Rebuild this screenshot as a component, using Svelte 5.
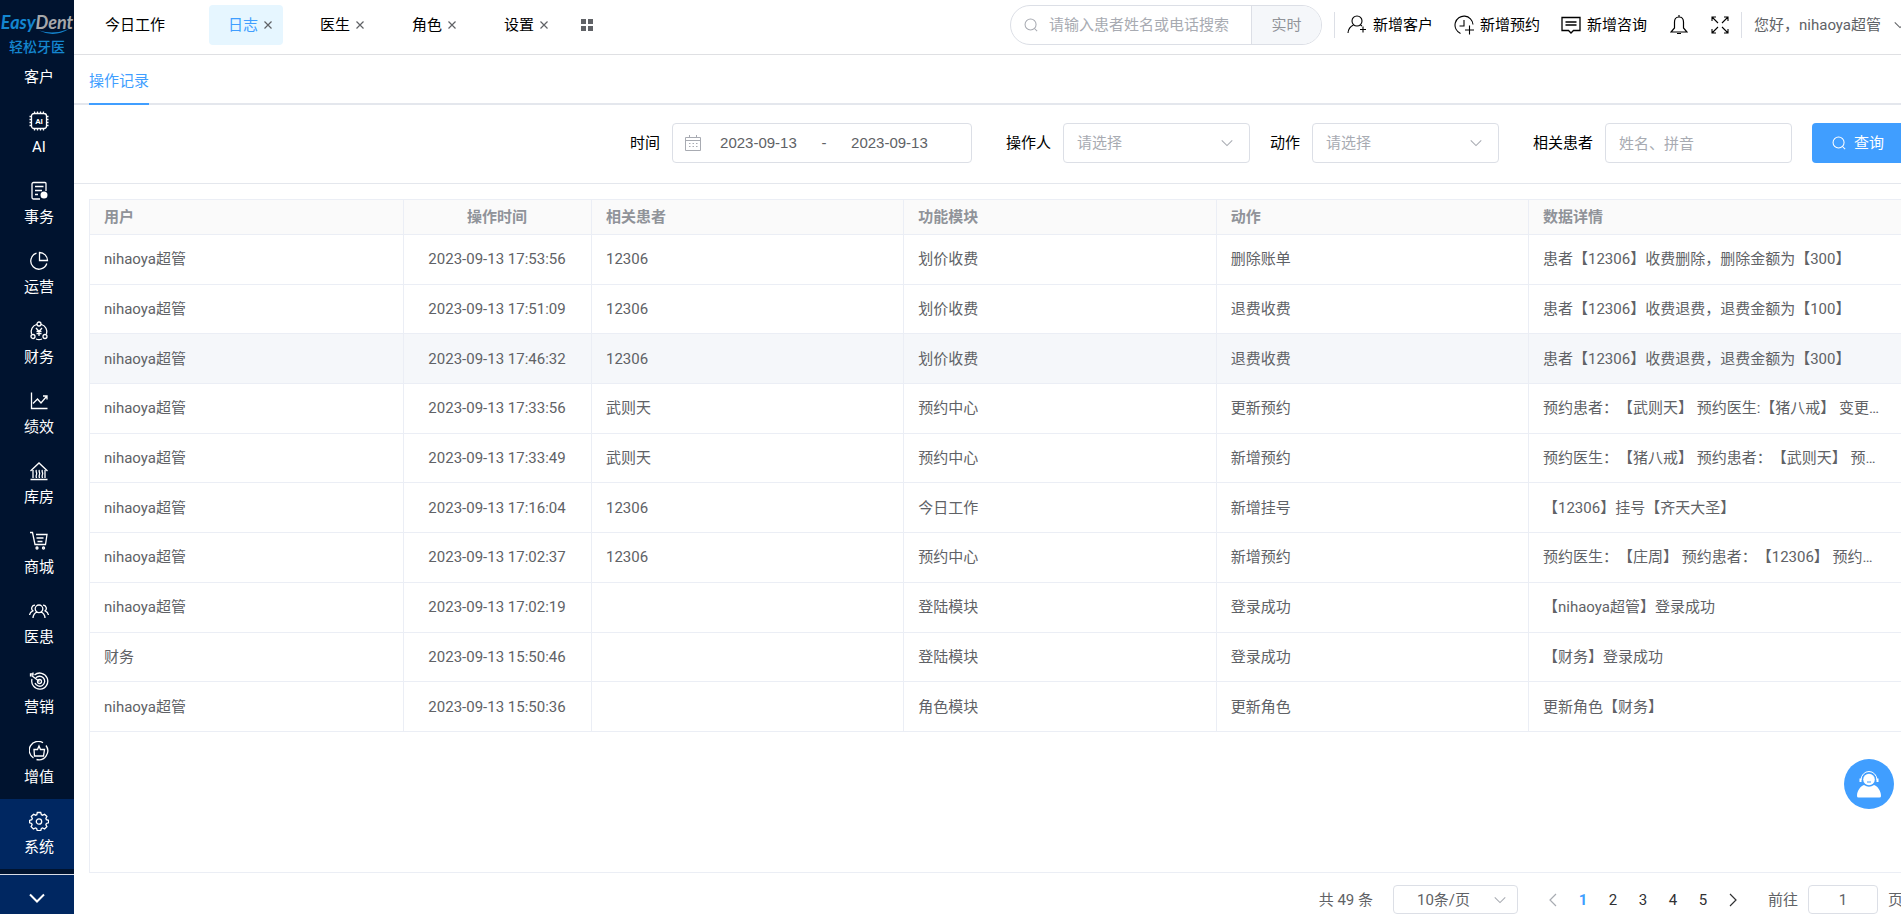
<script lang="ts">
	interface NavItem {
		label: string;
		d: string;
		solid?: string;
		text?: string;
	}

	interface LogRow {
		user: string;
		time: string;
		patient: string;
		module: string;
		action: string;
		detail: string;
	}

	const navItems: NavItem[] = [
		{ label: '客户', d: 'M10 3a3 3 0 1 1 0 6a3 3 0 1 1 0-6M4 17c0-8 12-8 12 0' },
		{
			label: 'AI',
			d: 'M5 2.5h10a2.5 2.5 0 0 1 2.5 2.5v10a2.5 2.5 0 0 1-2.5 2.5H5A2.5 2.5 0 0 1 2.5 15V5A2.5 2.5 0 0 1 5 2.5zM5.5 2V.5M8.5 2V.5M11.5 2V.5M14.5 2V.5M5.5 18v1.5M8.5 18v1.5M11.5 18v1.5M14.5 18v1.5M2 5.5H.5M2 8.5H.5M2 11.5H.5M2 14.5H.5M18 5.5h1.5M18 8.5h1.5M18 11.5h1.5M18 14.5h1.5',
			text: 'AI'
		},
		{
			label: '事务',
			d: 'M11 18H4.5a1.5 1.5 0 0 1-1.5-1.5V3a1.5 1.5 0 0 1 1.5-1.5H16A1 1 0 0 1 17 2.5V10M6 5.5h8.5M6 9.5h7M6 13.5h3',
			solid: 'M15 10.5a3.5 3.5 0 1 1 0 7a3.5 3.5 0 1 1 0-7'
		},
		{ label: '运营', d: 'M7.5 2.2a8.2 8.2 0 1 0 10.3 10.3M10.5 1.5v8h8a8 8 0 0 0-8-8z' },
		{
			label: '财务',
			d: 'M7.5 3.5A7.5 7.5 0 0 0 2.5 13M12.5 3.5a7.5 7.5 0 0 1 5 9.5M7 18c2 .8 4 .8 6 0M10 1a2 2 0 1 1 0 4a2 2 0 1 1 0-4M4 13.5a2 2 0 1 1 0 4a2 2 0 1 1 0-4M16 13.5a2 2 0 1 1 0 4a2 2 0 1 1 0-4M7 7l3 3.5L13 7M10 10.5V15M7.5 10.5h5M7.5 12.7h5'
		},
		{ label: '绩效', d: 'M2.5 1.5V17.5h16M4 12.5l4.5-4.5l3.5 4L17.5 5.5M14 5h4v3.5' },
		{
			label: '库房',
			d: 'M1.5 10L10 2l8.5 8M4 9v8M16 9v8M1.5 18.5h17M7.5 9c-1.5 1.5 1 2.5 0 4.5s0 3 0 3.5M10.5 9c-1.5 1.5 1 2.5 0 4.5s0 3 0 3.5M13.5 9c-1.5 1.5 1 2.5 0 4.5s0 3 0 3.5'
		},
		{
			label: '商城',
			d: 'M1 1.5h2.5L6 13.5h10.5L18 3.5H7M7.5 7h7M8.500 10.500h5M8 16a1 1 0 1 1 0 2a1 1 0 1 1 0-2M14.5 16a1 1 0 1 1 0 2a1 1 0 1 1 0-2'
		},
		{
			label: '医患',
			d: 'M10 4a3.8 3.8 0 1 1 0 7.6a3.8 3.8 0 1 1 0-7.6M4 17c0-3 2-5.5 4-5.8M16 17c0-3-2-5.5-4-5.8M6 4.2a3.2 3.2 0 0 0-2.2 5.6C2 10.5.8 12 .6 14M14 4.2a3.2 3.2 0 0 1 2.2 5.6c1.8.7 3 2.2 3.2 4.2'
		},
		{
			label: '营销',
			d: 'M5.5 4A8 8 0 1 1 3 8M6.500 7.500A5 5 0 1 1 6 12M10.5 8.500a2 2 0 1 1 0 4a2 2 0 1 1 0-4M10.5 10.5L2.5 4.5M1.5 5.5V3h3M4 1.5v3'
		},
		{
			label: '增值',
			d: 'M4.5 17A9 9 0 1 1 14 1.7M17 4.5a9 9 0 0 1-9.5 14M5 8.5h3.5L10 5l1.500 3.500H15.500L14.500 15H5.500z'
		},
		{
			label: '系统',
			d: 'M8.3 1.5h3.4l.7 2.2 1.2.5 2-1 2.3 2.3-1 2 .5 1.2 2.2.7v2.4l-2.200.7-.5 1.2 1 2-2.3 2.3-2-1-1.2.5-.7 2.2H8.3l-.7-2.2-1.2-.5-2 1-2.3-2.3 1-2-.5-1.2L.6 11.800V9.400l2.200-.7.5-1.2-1-2 2.300-2.300 2 1 1.2-.5zM10 7.8a2.7 2.7 0 1 1 0 5.4a2.7 2.7 0 1 1 0-5.4'
		}
	];

	const tabs = ['日志', '医生', '角色', '设置'];

	const rows: LogRow[] = [
		{ user: 'nihaoya超管', time: '2023-09-13 17:53:56', patient: '12306', module: '划价收费', action: '删除账单', detail: '患者【12306】收费删除，删除金额为【300】' },
		{ user: 'nihaoya超管', time: '2023-09-13 17:51:09', patient: '12306', module: '划价收费', action: '退费收费', detail: '患者【12306】收费退费，退费金额为【100】' },
		{ user: 'nihaoya超管', time: '2023-09-13 17:46:32', patient: '12306', module: '划价收费', action: '退费收费', detail: '患者【12306】收费退费，退费金额为【300】' },
		{ user: 'nihaoya超管', time: '2023-09-13 17:33:56', patient: '武则天', module: '预约中心', action: '更新预约', detail: '预约患者：【武则天】 预约医生:【猪八戒】 变更预约时间' },
		{ user: 'nihaoya超管', time: '2023-09-13 17:33:49', patient: '武则天', module: '预约中心', action: '新增预约', detail: '预约医生：【猪八戒】 预约患者：【武则天】 预约时间' },
		{ user: 'nihaoya超管', time: '2023-09-13 17:16:04', patient: '12306', module: '今日工作', action: '新增挂号', detail: '【12306】挂号【齐天大圣】' },
		{ user: 'nihaoya超管', time: '2023-09-13 17:02:37', patient: '12306', module: '预约中心', action: '新增预约', detail: '预约医生：【庄周】 预约患者：【12306】 预约时间' },
		{ user: 'nihaoya超管', time: '2023-09-13 17:02:19', patient: '', module: '登陆模块', action: '登录成功', detail: '【nihaoya超管】登录成功' },
		{ user: '财务', time: '2023-09-13 15:50:46', patient: '', module: '登陆模块', action: '登录成功', detail: '【财务】登录成功' },
		{ user: 'nihaoya超管', time: '2023-09-13 15:50:36', patient: '', module: '角色模块', action: '更新角色', detail: '更新角色【财务】' }
	];

	let activeNav = $state('系统');
	let activeTab = $state('日志');
	let activeRow = $state(2);
	let page = $state(1);
	let startDate = $state('2023-09-13');
	let endDate = $state('2023-09-13');
</script>

{#snippet chevron(size: number)}
	<svg class="chevron" viewBox="0 0 16 16" width={size} height={size} fill="none" stroke="currentColor" stroke-width="1.2"><path d="M2 5l6 6 6-6" /></svg>
{/snippet}

{#snippet magnifier(size: number)}
	<svg viewBox="0 0 16 16" width={size} height={size} fill="none" stroke="currentColor" stroke-width="1.2"><circle cx="7.5" cy="7.5" r="6.3" /><path d="M12 12l3 3" /></svg>
{/snippet}

<div class="app">
	<aside class="sidebar">
		<div class="logo">
			<div class="logo-name">
				<span class="easy">Easy</span><span class="dent">Dent</span>
				<svg class="smile" viewBox="0 0 30 7" width="30" height="7"><path d="M0 1.5Q15 9 30 0Q15 6 0 1.5z" fill="#1486d0" /></svg>
			</div>
			<div class="logo-sub">轻松牙医</div>
		</div>
		<nav>
			{#each navItems as item}
				<button class="nav-item" class:active={activeNav === item.label} onclick={() => (activeNav = item.label)}>
					<svg viewBox="0 0 20 20" width="20" height="20" fill="none" stroke="currentColor" stroke-width="1.3">
						<path d={item.d} />
						{#if item.solid}<path d={item.solid} fill="currentColor" stroke="none" />{/if}
						{#if item.text}<text x="10" y="13" text-anchor="middle" font-size="8" font-weight="700" fill="currentColor" stroke="none">{item.text}</text>{/if}
					</svg>
					<span>{item.label}</span>
				</button>
			{/each}
		</nav>
		<button class="nav-more" aria-label="更多">
			<svg viewBox="0 0 16 10" width="16" height="10" fill="none" stroke="currentColor" stroke-width="2"><path d="M1 1.5l7 7 7-7" /></svg>
		</button>
	</aside>

	<main>
		<header>
			<div class="tabs">
				<button class="home-tab">今日工作</button>
				{#each tabs as tab}
					<div class="tab" class:active={activeTab === tab}>
						<button onclick={() => (activeTab = tab)}>{tab}</button>
						<button class="close" aria-label="关闭{tab}">
							<svg viewBox="0 0 8 8" width="8" height="8" stroke="currentColor" stroke-width="1.2"><path d="M.5.5l7 7M7.5.5l-7 7" /></svg>
						</button>
					</div>
				{/each}
				<button class="grid-btn" aria-label="全部标签">
					<svg viewBox="0 0 12 12" width="12" height="12" fill="#606266"><path d="M0 0h5v5H0zM7 0h5v5H7zM0 7h5v5H0zM7 7h5v5H7z" /></svg>
				</button>
			</div>

			<div class="tools">
				<div class="search">
					{@render magnifier(14)}
					<input placeholder="请输入患者姓名或电话搜索" aria-label="搜索患者" />
					<button>实时</button>
				</div>
				<span class="divider"></span>
				<div class="quick">
					<button>
						<svg viewBox="0 0 20 20" width="20" height="20" fill="none" stroke="currentColor" stroke-width="1.1"><circle cx="10" cy="6" r="5" /><path d="M1 18c.3-4 2.200-6.500 5.500-8M13.500 10l1.500 1M16 11.500v6M13 14.500h6" /></svg>
						新增客户
					</button>
					<button>
						<svg viewBox="0 0 20 20" width="20" height="20" fill="none" stroke="currentColor" stroke-width="1.1"><path d="M6.500 18.400A9 9 0 1 1 19 9.500M10 5v6H5.500M15.500 10.500v9M11 15h9" /></svg>
						新增预约
					</button>
					<button>
						<svg viewBox="0 0 20 20" width="20" height="20" fill="none" stroke="currentColor" stroke-width="1.3"><path d="M1 2.5h18v13h-6.5L10 18l-2.5-2.5H1zM4.5 7h11M4.5 10h11" /></svg>
						新增咨询
					</button>
				</div>
				<button class="icon-btn" aria-label="消息">
					<svg viewBox="0 0 18 20" width="18" height="20" fill="none" stroke="currentColor" stroke-width="1.2"><path d="M9 2c-3.5 0-4.5 2.500-4.500 5V13L1 17h16l-3.500-4V7c0-2.500-1-5-4.500-5zM9 0v2M7 18.500h4" /></svg>
				</button>
				<button class="icon-btn" aria-label="全屏">
					<svg viewBox="0 0 18 18" width="18" height="18" fill="none" stroke="currentColor" stroke-width="1.1"><path d="M1 5V1h4M1 1l6 6M13 1h4v4M17 1l-6 6M1 13v4h4M1 17l6-6M17 13v4h-4M17 17l-6-6" /></svg>
				</button>
				<span class="divider"></span>
				<button class="account">您好，nihaoya超管 {@render chevron(14)}</button>
			</div>
		</header>

		<div class="subtabs"><a href="#log" class="current">操作记录</a></div>

		<form class="filters" onsubmit={(e) => e.preventDefault()}>
			<div class="field">
				<label for="start">时间</label>
				<div class="range">
					<svg viewBox="0 0 16 16" width="16" height="16" fill="none" stroke="currentColor"><path d="M.5 2.5h15v13H.5zM.5 5.5h15M4.5 0v3M11.5 0v3" /><path d="M4 8.5h9M4 11.5h9" stroke-dasharray="1.5 2" /></svg>
					<input id="start" bind:value={startDate} />
					<span>-</span>
					<input aria-label="结束时间" bind:value={endDate} />
				</div>
			</div>
			<div class="field apart">
				<label for="operator">操作人</label>
				<div class="select">
					<select id="operator"><option>请选择</option></select>
					{@render chevron(14)}
				</div>
			</div>
			<div class="field">
				<label for="action">动作</label>
				<div class="select">
					<select id="action"><option>请选择</option></select>
					{@render chevron(14)}
				</div>
			</div>
			<div class="field apart">
				<label for="patient">相关患者</label>
				<input id="patient" class="text" placeholder="姓名、拼音" />
			</div>
			<button class="query">{@render magnifier(14)}查询</button>
		</form>

		<section class="content">
			<div class="table-box">
				<table>
					<colgroup><col class="user" /><col class="time" /><col /><col /><col /><col class="detail" /></colgroup>
					<thead>
						<tr><th>用户</th><th class="center">操作时间</th><th>相关患者</th><th>功能模块</th><th>动作</th><th>数据详情</th></tr>
					</thead>
					<tbody>
						{#each rows as row, i}
							<tr class:hovered={activeRow === i} onmouseenter={() => (activeRow = i)}>
								<td>{row.user}</td>
								<td class="center">{row.time}</td>
								<td>{row.patient}</td>
								<td>{row.module}</td>
								<td>{row.action}</td>
								<td>{row.detail}</td>
							</tr>
						{/each}
					</tbody>
				</table>
			</div>

			<div class="pagination">
				<span>共 49 条</span>
				<div class="select size">
					<select aria-label="每页条数"><option>10条/页</option></select>
					{@render chevron(14)}
				</div>
				<div class="pager">
					<button class="prev" aria-label="上一页" disabled>
						<svg viewBox="0 0 8 14" width="8" height="14" fill="none" stroke="currentColor" stroke-width="1.2"><path d="M7 1L1 7l6 6" /></svg>
					</button>
					{#each [1, 2, 3, 4, 5] as n}
						<button class:current={page === n} onclick={() => (page = n)}>{n}</button>
					{/each}
					<button aria-label="下一页">
						<svg viewBox="0 0 8 14" width="8" height="14" fill="none" stroke="currentColor" stroke-width="1.2"><path d="M1 1l6 6-6 6" /></svg>
					</button>
				</div>
				<label class="jump">前往 <input bind:value={page} /> 页</label>
			</div>
		</section>
	</main>

	<button class="service" aria-label="在线客服">
		<svg viewBox="0 0 26 28" width="26" height="28" fill="#fff">
			<circle cx="13" cy="9.5" r="5.8" />
			<path d="M1 26c0-6 4-10 7-11q5 3.500 10 0c3 1 7 5 7 11q0 1.500-1.500 1.500h-21Q1 27.500 1 26z" />
			<path d="M5 10a8 8.500 0 0 1 16 0" fill="none" stroke="#fff" />
			<path d="M3.500 8.500h2v3.500h-2zM20.500 8.500h2v3.500h-2z" />
			<path d="M11 12h4" stroke="#409eff" />
		</svg>
	</button>
</div>

<style>
	:global(body) {
		margin: 0;
		overflow: hidden;
	}

	.app {
		display: flex;
		height: 100vh;
		overflow: hidden;
		background: #fff;
		color: #606266;
		font-family: Roboto, 'Noto Sans CJK SC', sans-serif;
		font-size: 15px;
		line-height: 20px;
		text-spacing-trim: space-all;
	}

	button,
	input,
	select {
		box-sizing: border-box;
		margin: 0;
		padding: 0;
		border: none;
		background: none;
		color: inherit;
		font: inherit;
		outline: none;
	}
	button {
		cursor: pointer;
		white-space: nowrap;
	}
	svg {
		display: block;
		flex-shrink: 0;
	}

	.sidebar {
		display: flex;
		flex-direction: column;
		flex-shrink: 0;
		width: 74px;
		background: #00132f;
		color: #fff;
	}

	.logo {
		display: flex;
		flex-direction: column;
		align-items: center;
		box-sizing: border-box;
		height: 58px;
		padding-top: 10px;
		overflow: hidden;
	}
	.logo-name {
		position: relative;
		height: 26px;
		font-family: Lato, 'Open Sans', sans-serif;
		font-size: 18px;
		font-weight: 700;
		font-style: italic;
		line-height: 24px;
	}
	.easy {
		color: #1486d0;
	}
	.dent {
		color: #a6a8ab;
	}
	.smile {
		position: absolute;
		right: 4px;
		bottom: 0;
	}
	.logo-sub {
		color: #1486d0;
		font-size: 14px;
		font-weight: 500;
		line-height: 22px;
	}

	nav {
		display: flex;
		flex: 1;
		flex-direction: column;
		justify-content: flex-end;
		min-height: 0;
		padding-bottom: 5px;
		overflow: hidden;
	}
	.nav-item {
		display: flex;
		flex-direction: column;
		flex-shrink: 0;
		align-items: center;
		gap: 6px;
		height: 70px;
		padding: 12px 0 0 4px;
	}
	.nav-item.active,
	.nav-more {
		background: #002761;
	}
	.nav-more {
		display: flex;
		align-items: center;
		justify-content: center;
		height: 40px;
		padding-top: 6px;
		border-top: 1px solid #d8dce5;
	}

	main {
		display: flex;
		flex: 1;
		flex-direction: column;
		min-width: 0;
		margin-right: -17px;
	}

	header {
		display: flex;
		justify-content: space-between;
		box-sizing: border-box;
		height: 55px;
		padding: 5px 11px 9px 11px;
		border-bottom: 1px solid #dfe0e3;
		color: #000;
	}
	.tabs,
	.tools,
	.quick {
		display: flex;
		align-items: center;
	}
	.tabs {
		gap: 18px;
	}
	.home-tab {
		padding: 0 6px 0 20px;
		margin-right: 2px;
	}
	.home-tab + .tab {
		margin-left: 18px;
	}
	.tab {
		display: flex;
		align-items: center;
		gap: 6px;
		height: 40px;
		padding: 0 11px 0 19px;
		border-radius: 4px;
	}
	.tab.active {
		background: #e6f6ff;
	}
	.tab.active button:first-child {
		color: #409eff;
	}
	.tab .close {
		color: #606266;
	}
	.grid-btn {
		padding-left: 4px;
	}

	.search {
		display: flex;
		align-items: center;
		box-sizing: border-box;
		width: 312px;
		height: 40px;
		padding-left: 13px;
		overflow: hidden;
		border: 1px solid #dcdfe6;
		border-radius: 20px;
		color: #a8abb2;
	}
	.search input {
		flex: 1;
		min-width: 0;
		height: 100%;
		padding-left: 11px;
		color: #606266;
	}
	.search button {
		width: 70px;
		height: 100%;
		border-left: 1px solid #dcdfe6;
		background: #f5f7fa;
		color: #909399;
	}
	input::placeholder {
		color: #a8abb2;
		opacity: 1;
	}
	.divider {
		width: 1px;
		height: 26px;
		margin: 0 12px;
		background: #dcdfe6;
	}
	.quick {
		gap: 21px;
	}
	.quick button {
		display: flex;
		align-items: center;
		gap: 6px;
	}
	.icon-btn {
		margin-left: 23px;
	}
	.account {
		display: flex;
		align-items: center;
		gap: 12px;
		color: #606266;
	}

	.subtabs {
		box-sizing: border-box;
		height: 50px;
		padding: 0 15px;
		box-shadow: inset 0 -2px #e4e7ed;
	}
	.subtabs a {
		display: inline-block;
		box-sizing: border-box;
		height: 50px;
		padding-top: 16px;
		border-bottom: 2px solid #409eff;
		color: #409eff;
		text-decoration: none;
	}

	.filters {
		display: flex;
		align-items: center;
		justify-content: flex-end;
		gap: 20px;
		padding: 18px 14px 20px;
		border-bottom: 1px solid #e4e7ed;
		color: #606266;
		font-family: 'Liberation Sans', 'Noto Sans CJK SC', sans-serif;
	}
	.field {
		display: flex;
		align-items: center;
		gap: 12px;
	}
	.field.apart {
		margin-left: 14px;
	}
	.field label {
		color: #000;
	}
	.range,
	.text,
	.select {
		box-sizing: border-box;
		height: 40px;
		border: 1px solid #dcdfe6;
		border-radius: 4px;
	}
	.range {
		display: flex;
		align-items: center;
		width: 300px;
		padding-left: 12px;
	}
	.range svg {
		color: #a8abb2;
	}
	.range input {
		width: 115px;
		text-align: center;
	}
	.range span {
		width: 16px;
		text-align: center;
	}
	.text {
		width: 187px;
		padding: 0 13px;
	}
	.select {
		position: relative;
		width: 187px;
		color: #a8abb2;
	}
	.select select {
		width: 100%;
		height: 100%;
		padding: 0 30px 0 13px;
		appearance: none;
	}
	.select :global(.chevron) {
		position: absolute;
		top: 50%;
		right: 15px;
		margin-top: -7px;
		pointer-events: none;
	}
	.query {
		display: flex;
		align-items: center;
		gap: 8px;
		height: 40px;
		padding: 0 20px;
		border-radius: 4px;
		background: #409eff;
		color: #fff;
	}

	.content {
		display: flex;
		flex: 1;
		flex-direction: column;
		min-height: 0;
		padding: 15px 15px 0;
	}
	.table-box {
		flex: 1;
		border: 1px solid #ebeef5;
	}
	table {
		width: 100%;
		height: 532px;
		table-layout: fixed;
		border-spacing: 0;
	}
	col.user {
		width: 314px;
	}
	col.time {
		width: 188px;
	}
	col.detail {
		width: 373px;
	}
	th,
	td {
		box-sizing: border-box;
		padding: 0 15px 0 14px;
		overflow: hidden;
		border-right: 1px solid #ebeef5;
		border-bottom: 1px solid #ebeef5;
		text-align: left;
		text-overflow: ellipsis;
		white-space: nowrap;
	}
	th {
		height: 35px;
		background: #fafafa;
		color: #909399;
		font-weight: 600;
	}
	.center {
		text-align: center;
	}
	.hovered td {
		background: #f5f7fa;
	}

	.pagination {
		display: flex;
		align-items: center;
		justify-content: flex-end;
		height: 29px;
		padding-top: 12px;
	}
	.size {
		width: 125px;
		height: 29px;
		margin: 0 20px;
		color: #606266;
	}
	.size select {
		padding-left: 23px;
	}
	.size :global(.chevron) {
		right: 10px;
		color: #a8abb2;
	}
	.pager {
		display: flex;
		color: #303133;
	}
	.pager button {
		display: flex;
		align-items: center;
		justify-content: center;
		width: 30px;
	}
	.pager .prev {
		color: #a8abb2;
	}
	.pager .current {
		color: #409eff;
		font-weight: 700;
	}
	.jump {
		display: flex;
		align-items: center;
		gap: 10px;
		margin-left: 20px;
	}
	.jump input {
		width: 70px;
		height: 29px;
		border: 1px solid #dcdfe6;
		border-radius: 4px;
		text-align: center;
	}

	.service {
		position: fixed;
		right: 7px;
		bottom: 105px;
		display: flex;
		align-items: center;
		justify-content: center;
		width: 50px;
		height: 50px;
		border-radius: 50%;
		background: #409eff;
	}
</style>
